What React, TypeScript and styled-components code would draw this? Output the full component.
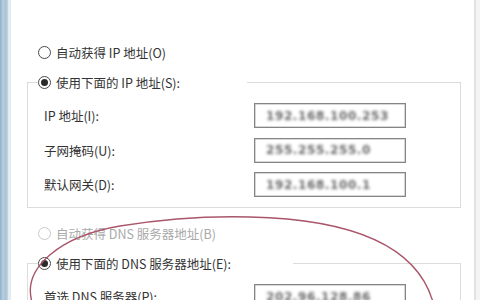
import styled, { createGlobalStyle } from "styled-components";

const GlobalStyle = createGlobalStyle`
  html, body {
    margin: 0;
    padding: 0;
    background: #ffffff;
  }
  #root {
    width: 480px;
    height: 300px;
    overflow: hidden;
  }
`;

const Screen = styled.div`
  position: relative;
  display: flex;
  width: 480px;
  height: 300px;
  overflow: hidden;
  font-family: "Noto Sans CJK SC", "Noto Sans", sans-serif;
  font-size: 12.5px;
  color: #333333;
`;

const BackWindow = styled.div`
  width: 8px;
  flex-shrink: 0;
  background: linear-gradient(to right, #8fb0c8 0, #b7cfe0 3px, #a6c1d6 6px, #c9dae7 8px);
  border-right: 3px solid #e4ebf1;
`;

const Dialog = styled.div`
  flex: 1;
  display: flex;
  flex-direction: column;
  background: #ffffff;
  padding-left: 16px;
  border-right: 2px solid #e2e2e2;
`;

const RightEdge = styled.div`
  width: 4px;
  flex-shrink: 0;
  background: #f4f4f4;
`;

const CutText = styled.div`
  height: 6px;
  overflow: hidden;
  display: flex;
  align-items: flex-end;
  padding-left: 20px;
  color: #d2d2d2;
  line-height: 16px;
  white-space: nowrap;
  filter: blur(0.4px);
`;

const RadioRow = styled.label<{ $disabled?: boolean; $indent?: number }>`
  display: flex;
  align-items: center;
  gap: 5px;
  height: 16px;
  margin-left: ${(p) => p.$indent ?? 0}px;
  color: ${(p) => (p.$disabled ? "#a9a9a9" : "#333333")};
  white-space: nowrap;
`;

const RadioDot = styled.span<{ $checked?: boolean; $disabled?: boolean }>`
  box-sizing: border-box;
  width: 13px;
  height: 13px;
  border-radius: 50%;
  border: 1px solid ${(p) => (p.$disabled ? "#c8c8c8" : "#4a4a4a")};
  background: #fff;
  display: flex;
  align-items: center;
  justify-content: center;
  &::after {
    content: "";
    display: ${(p) => (p.$checked ? "block" : "none")};
    width: 7px;
    height: 7px;
    border-radius: 50%;
    background: #2a2a2a;
  }
`;

const Group = styled.fieldset<{ $open?: boolean }>`
  margin: 0;
  width: 434px;
  box-sizing: border-box;
  border: 1px solid #dcdcdc;
  border-bottom: ${(p) => (p.$open ? "none" : "1px solid #dcdcdc")};
  padding: 13px 0 10px 0;
  display: flex;
  flex-direction: column;
  gap: 9.5px;
`;

const Legend = styled.legend<{ $width: number }>`
  margin-left: 10px;
  padding: 0;
  width: ${(p) => p.$width}px;
`;

const FieldRow = styled.div`
  display: flex;
  align-items: center;
  height: 25px;
  padding-left: 16px;
`;

const FieldLabel = styled.span`
  width: 210px;
  white-space: nowrap;
`;

const TextBox = styled.div`
  box-sizing: border-box;
  width: 152px;
  height: 25px;
  border: 1px solid #858585;
  box-shadow: inset 0 0 0 0.5px #b0b0b0;
  display: flex;
  align-items: center;
  padding-left: 11px;
  overflow: hidden;
`;

const Hidden = styled.span`
  font-family: "DejaVu Sans", sans-serif;
  font-weight: bold;
  font-size: 12px;
  line-height: 14px;
  letter-spacing: 0.6px;
  color: #6a6a6a;
  filter: blur(1.4px);
  white-space: nowrap;
`;

const Circle = styled.svg`
  position: absolute;
  left: 0;
  top: 0;
  pointer-events: none;
`;

const Spacer = styled.div<{ $h: number }>`
  height: ${(p) => p.$h}px;
  flex-shrink: 0;
`;

export default function App() {
  return (
    <>
      <GlobalStyle />
      <Screen>
        <BackWindow />
        <Dialog>
          <CutText>系统管理员处获得适当的 IP 设置。</CutText>
          <Spacer $h={44} />
          <RadioRow $indent={11}>
            <RadioDot />
            自动获得 IP 地址(O)
          </RadioRow>
          <Spacer $h={14} />
          <Group>
            <Legend $width={209}>
              <RadioRow>
                <RadioDot $checked />
                使用下面的 IP 地址(S):
              </RadioRow>
            </Legend>
            <FieldRow>
              <FieldLabel>IP 地址(I):</FieldLabel>
              <TextBox>
                <Hidden>192.168.100.253</Hidden>
              </TextBox>
            </FieldRow>
            <FieldRow>
              <FieldLabel>子网掩码(U):</FieldLabel>
              <TextBox>
                <Hidden>255.255.255.0</Hidden>
              </TextBox>
            </FieldRow>
            <FieldRow>
              <FieldLabel>默认网关(D):</FieldLabel>
              <TextBox>
                <Hidden>192.168.100.1</Hidden>
              </TextBox>
            </FieldRow>
          </Group>
          <Spacer $h={17} />
          <RadioRow $disabled $indent={11}>
            <RadioDot $disabled />
            自动获得 DNS 服务器地址(B)
          </RadioRow>
          <Spacer $h={14} />
          <Group $open>
            <Legend $width={255}>
              <RadioRow>
                <RadioDot $checked />
                使用下面的 DNS 服务器地址(E):
              </RadioRow>
            </Legend>
            <FieldRow>
              <FieldLabel>首选 DNS 服务器(P):</FieldLabel>
              <TextBox>
                <Hidden>202.96.128.86</Hidden>
              </TextBox>
            </FieldRow>
          </Group>
        </Dialog>
        <RightEdge />
        <Circle width="480" height="300" viewBox="0 0 480 300">
          <path
            d="M 32 302 C 22 268, 60 236, 120 226 C 170 218, 215 216, 250 217 C 340 219, 415 240, 433 302"
            fill="none"
            stroke="#a9566a"
            strokeWidth="1.4"
          />
        </Circle>
      </Screen>
    </>
  );
}
